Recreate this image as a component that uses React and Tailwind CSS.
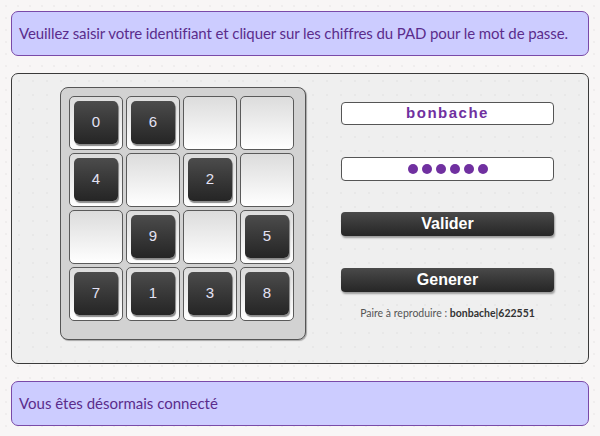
const PAD = ['0', '6', '', '', '4', '', '2', '', '', '9', '', '5', '7', '1', '3', '8'];

const Cell = ({ value }) => (
    <div className="w-[54px] h-[54px] rounded-[5px] border border-[#5a5a5a] bg-gradient-to-b from-[#dcdcdc] to-white p-[4px]">
        {value !== '' && (
            <div className="w-[44px] h-[43px] rounded-[5px] bg-gradient-to-b from-[#4c4c4c] to-[#252525] shadow-[1px_2px_1px_rgba(0,0,0,0.45)] flex items-center justify-center text-[15px] text-[#e4e2f4] font-['Liberation_Sans',Arial,sans-serif]">
                {value}
            </div>
        )}
    </div>
);

const Message = ({ children, className = '' }) => (
    <div className={`h-[45px] shrink-0 rounded-[7px] border border-[#7a4aa8] bg-[#ccccff] px-[7px] flex items-center text-[15px] text-[#5b2c8c] font-['Lato',sans-serif] ${className}`}>
        {children}
    </div>
);

const DarkButton = ({ label }) => (
    <button className="w-[213px] h-[24px] rounded-[4px] bg-gradient-to-b from-[#4a4a4a] to-[#262626] shadow-[1px_2px_2px_rgba(0,0,0,0.35)] text-white text-[16px] font-bold font-['Liberation_Sans',Arial,sans-serif] flex items-center justify-center">
        {label}
    </button>
);

export default function App() {
    return (
        <div className="w-[600px] h-[436px] bg-[#f8f6f6] bg-[radial-gradient(#e6e3e3_0.6px,transparent_0.8px)] bg-[length:12px_12px] px-[11px] pt-[11px] flex flex-col gap-[17px]">
            <Message className="tracking-[-0.1px]">Veuillez saisir votre identifiant et cliquer sur les chiffres du PAD pour le mot de passe.</Message>

            <div className="h-[291px] shrink-0 rounded-[7px] border border-[#3a3a3a] bg-[#efefef] bg-[radial-gradient(#e0e0e0_0.6px,transparent_0.8px)] bg-[length:14px_14px] pl-[48px] pt-[13px] flex">
                <div className="w-[246px] h-[253px] rounded-[8px] border border-[#555] bg-[#d2d2d2] shadow-[1px_1px_1px_rgba(0,0,0,0.3)] pl-[8px] pt-[8px]">
                    <div className="grid grid-cols-[repeat(4,54px)] gap-x-[3px] gap-y-[3px]">
                        {PAD.map((v, i) => (
                            <Cell key={i} value={v} />
                        ))}
                    </div>
                </div>

                <div className="ml-[35px] pt-[15px] flex flex-col">
                    <div className="w-[213px] h-[23px] rounded-[4px] border border-[#555] bg-white flex items-center justify-center text-[15px] font-bold tracking-[1.5px] text-[#7030a0] font-['Liberation_Sans',Arial,sans-serif]">
                        bonbache
                    </div>
                    <div className="mt-[32px] w-[213px] h-[24px] rounded-[4px] border border-[#555] bg-white flex items-center justify-center gap-[4px]">
                        {[0, 1, 2, 3, 4, 5].map(i => (
                            <span key={i} className="w-[10px] h-[10px] rounded-full bg-[#7030a0]" />
                        ))}
                    </div>
                    <div className="mt-[31px]">
                        <DarkButton label="Valider" />
                    </div>
                    <div className="mt-[32px]">
                        <DarkButton label="Generer" />
                    </div>
                    <div className="mt-[14px] text-center text-[10.5px] text-[#555] font-['Lato',sans-serif]">
                        Paire à reproduire : <span className="font-bold text-[#333]">bonbache|622551</span>
                    </div>
                </div>
            </div>

            <Message>Vous êtes désormais connecté</Message>
        </div>
    );
}
